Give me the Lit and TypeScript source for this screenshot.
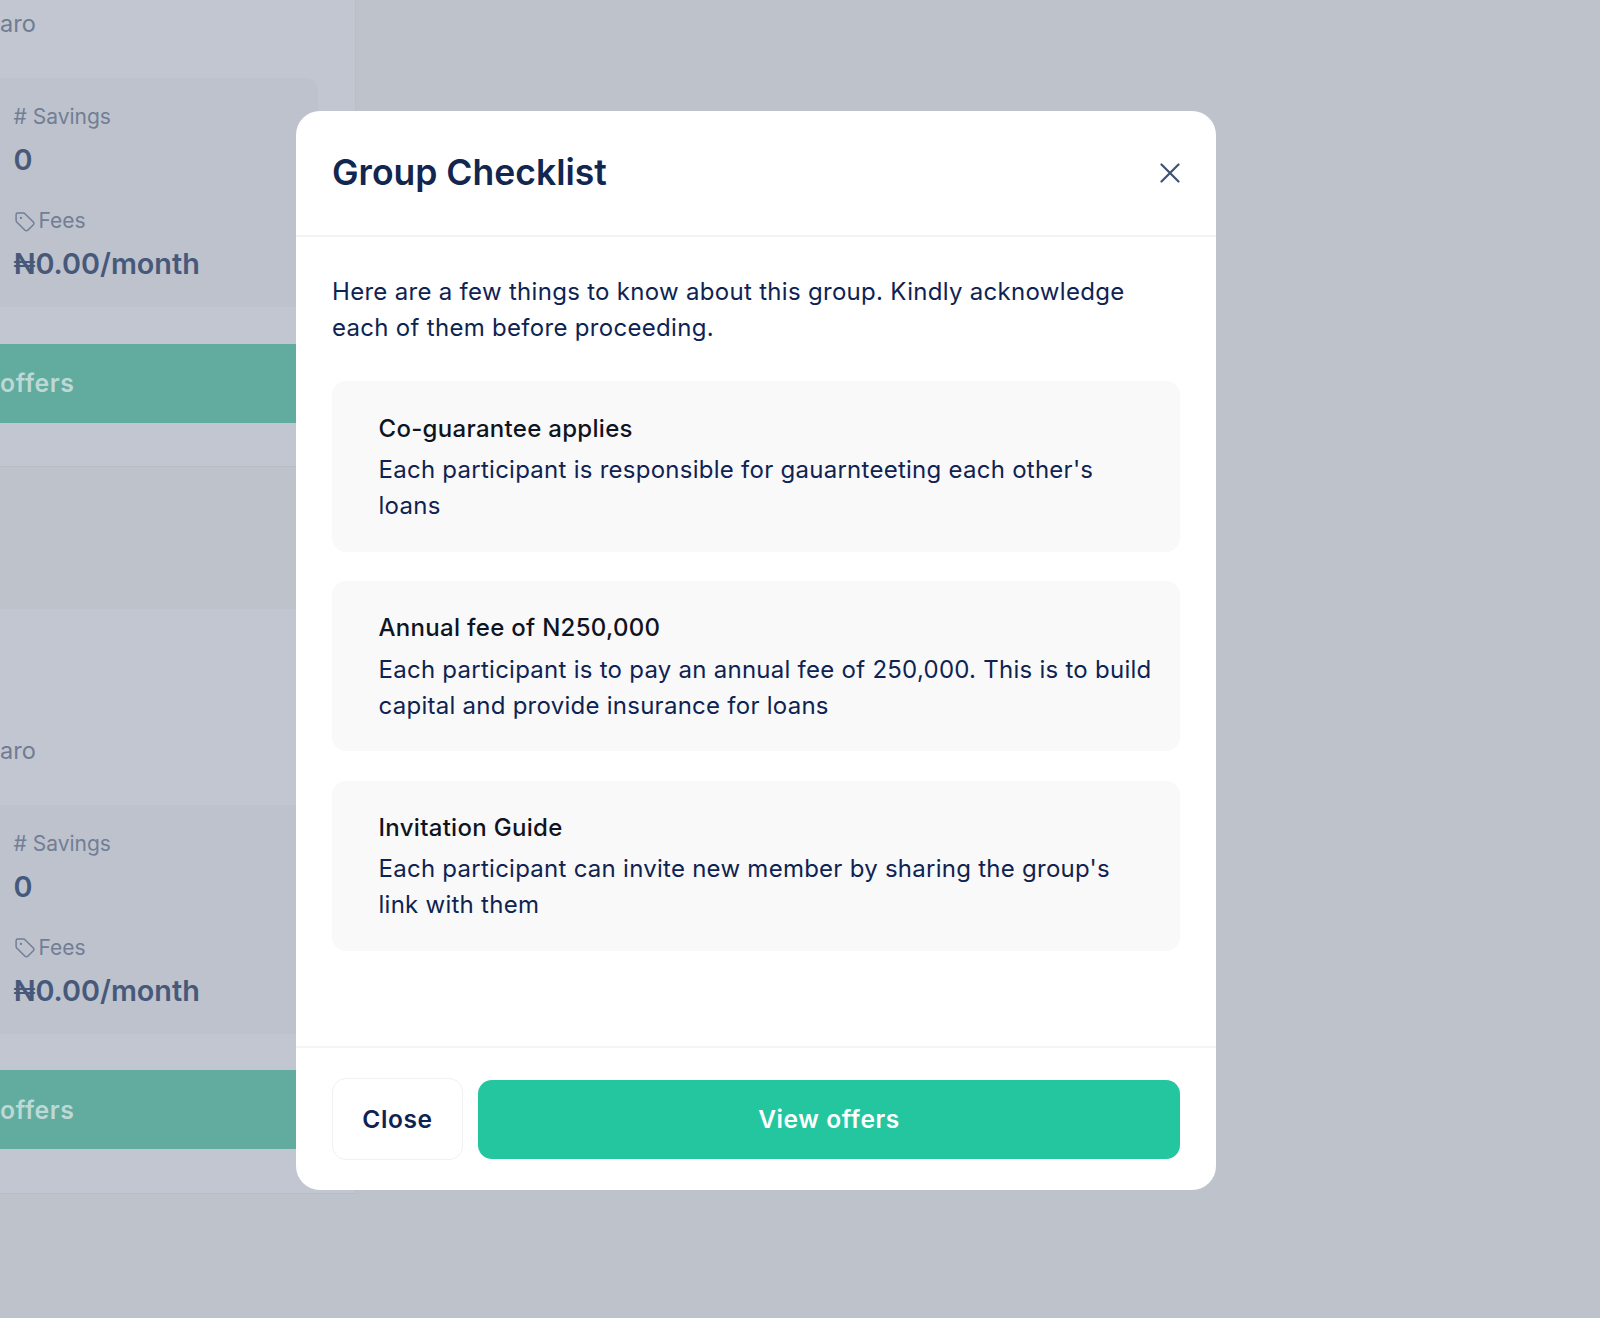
import { LitElement, html, css, svg } from 'lit';
import { customElement } from 'lit/decorators.js';

const tagIcon = svg`<path d="M2 3.5A1.5 1.5 0 0 1 3.5 2h5.6c.5 0 1 .2 1.3.55l8 8a1.8 1.8 0 0 1 0 2.55l-5.3 5.3a1.8 1.8 0 0 1-2.55 0l-8-8A1.9 1.9 0 0 1 2 9.1z" fill="none" stroke="currentColor" stroke-width="1.4" stroke-linejoin="round"/><circle cx="6.6" cy="6.6" r="1.1" fill="currentColor"/>`;

const items = [
  { title: 'Co-guarantee applies', text: "Each participant is responsible for gauarnteeting each other's loans" },
  { title: 'Annual fee of N250,000', text: 'Each participant is to pay an annual fee of 250,000. This is to build capital and provide insurance for loans' },
  { title: 'Invitation Guide', text: "Each participant can invite new member by sharing the group's link with them" },
];

@customElement('app-root')
export class AppRoot extends LitElement {
  static styles = css`
    :host {
      display: block;
      position: relative;
      height: 1318px;
      overflow: hidden;
      background: #bec2cb;
      font-family: Inter, 'Liberation Sans', sans-serif;
    }

    .panel {
      width: 356px;
    }

    .card {
      display: flex;
      flex-direction: column;
      justify-content: flex-end;
      background: #c2c6d0;
      border-bottom: 1px solid #b8bcc7;
      border-right: 1px solid #b9bdc8;
      box-sizing: border-box;
    }

    .card.first { height: 467px; padding-bottom: 43.5px; }
    .card.second { height: 585px; margin-top: 142px; padding-bottom: 44px; }

    .owner {
      font-size: 23.5px;
      line-height: 30px;
      color: #6f7c93;
      margin-bottom: 39px;
    }

    .stats {
      width: 318px;
      height: 229px;
      padding: 24px 0 0 13.5px;
      box-sizing: border-box;
      background: #bec2cc;
      border-radius: 0 12px 12px 0;
    }

    .label {
      display: flex;
      align-items: center;
      gap: 4px;
      font-size: 21px;
      line-height: 30px;
      color: #717e95;
    }

    .label svg {
      width: 21px;
      height: 21px;
      color: #717e95;
    }

    .value {
      font-size: 28.8px;
      line-height: 40px;
      font-weight: 600;
      color: #47597a;
      margin: 8px 0 26px;
    }

    .offers {
      display: flex;
      align-items: center;
      height: 79px;
      margin-top: 36.5px;
      background: #62ab9f;
      color: #bcd9d5;
      font-size: 24.8px;
      font-weight: 600;
      letter-spacing: 0.6px;
    }

    .modal {
      position: absolute;
      left: 296px;
      top: 111px;
      width: 920px;
      height: 1079px;
      display: flex;
      flex-direction: column;
      background: #fff;
      border-radius: 24px;
    }

    header {
      display: flex;
      align-items: center;
      justify-content: space-between;
      height: 126px;
      padding: 0 36px 2px;
      border-bottom: 2px solid #f3f4f6;
      box-sizing: border-box;
    }

    h1 {
      margin: 0;
      font-size: 35.5px;
      font-weight: 600;
      color: #12264f;
    }

    .x {
      width: 20px;
      height: 20px;
      margin-top: 2px;
      color: #3f5272;
    }

    .body {
      flex: 1;
      padding: 37px 36px 0;
    }

    .intro {
      margin: 0 0 35px;
      font-size: 24px;
      letter-spacing: 0.3px;
      line-height: 36px;
      color: #0f2352;
    }

    .item {
      height: 170.5px;
      margin-bottom: 29.25px;
      padding: 29.6px 24px 0 46.5px;
      box-sizing: border-box;
      background: #f9f9f9;
      border-radius: 14px;
    }

    .item h2 {
      margin: 0 0 5.3px;
      font-size: 24px;
      letter-spacing: 0.3px;
      line-height: 36px;
      font-weight: 450;
      color: #10141f;
    }

    .item p {
      margin: 0;
      font-size: 24px;
      letter-spacing: 0.26px;
      line-height: 36px;
      color: #0f2352;
    }

    footer {
      display: flex;
      gap: 15px;
      align-items: center;
      height: 144px;
      padding: 0 36px;
      border-top: 2px solid #f3f4f6;
      box-sizing: border-box;
    }

    button {
      font: inherit;
      font-size: 24.5px;
      font-weight: 600;
      letter-spacing: 0.6px;
      border-radius: 14px;
    }

    .close {
      width: 131px;
      height: 82px;
      background: #fff;
      border: 1.5px solid #f0f1f3;
      color: #0f2352;
    }

    .view {
      flex: 1;
      height: 79px;
      background: #24c6a0;
      border: none;
      color: #fff;
    }
  `;

  private renderCard(cls: string) {
    return html`
      <div class="card ${cls}">
        <div class="owner">aro</div>
        <div class="stats">
          <div class="label"># Savings</div>
          <div class="value">0</div>
          <div class="label"><svg viewBox="0 0 20 20">${tagIcon}</svg>Fees</div>
          <div class="value">₦0.00/month</div>
        </div>
        <div class="offers">offers</div>
      </div>
    `;
  }

  render() {
    return html`
      <div class="panel">
        ${this.renderCard('first')}
        ${this.renderCard('second')}
      </div>
      <section class="modal">
        <header>
          <h1>Group Checklist</h1>
          <svg class="x" viewBox="0 0 20 20" fill="none" stroke="currentColor" stroke-width="2.2" stroke-linecap="round">
            <path d="M1.5 1.5l17 17M18.5 1.5l-17 17" />
          </svg>
        </header>
        <div class="body">
          <p class="intro">Here are a few things to know about this group. Kindly acknowledge each of them before proceeding.</p>
          ${items.map(i => html`
            <div class="item">
              <h2>${i.title}</h2>
              <p>${i.text}</p>
            </div>
          `)}
        </div>
        <footer>
          <button class="close">Close</button>
          <button class="view">View offers</button>
        </footer>
      </section>
    `;
  }
}
